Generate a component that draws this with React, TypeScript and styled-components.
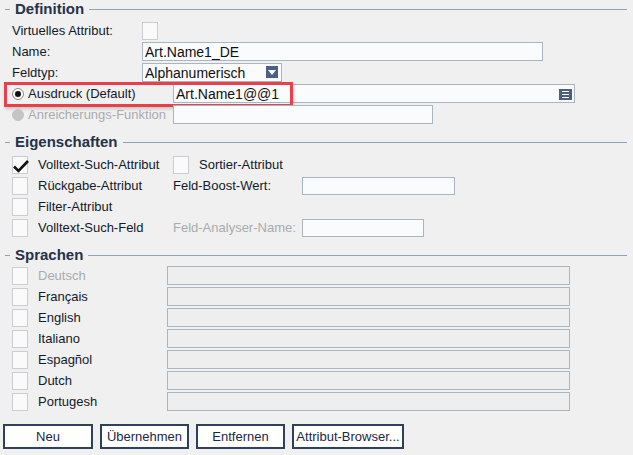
import React from "react"
import styled, { createGlobalStyle } from "styled-components"

const GlobalStyle = createGlobalStyle`
    html, body {
        margin: 0;
        padding: 0;
        background: #f0f0f0;
    }
    body {
        font-family: "Liberation Sans", Arial, sans-serif;
        font-size: 13px;
        color: #121a2b;
    }
`

const Page = styled.div`
    width: 633px;
    height: 455px;
    box-sizing: border-box;
    padding: 0 6px 0 5px;
    display: flex;
    flex-direction: column;
`

const Section = styled.section<{ $top: number }>`
    margin-top: ${(p) => p.$top}px;
`

const Header = styled.div`
    height: 18px;
    display: flex;
    align-items: center;
`

const Dash = styled.span`
    width: 5px;
    height: 1px;
    background: #8fa3bd;
`

const Title = styled.span`
    font-size: 15px;
    font-weight: bold;
    color: #25324a;
    padding: 0 5px 0 5px;
    line-height: 18px;
`

const Line = styled.span`
    flex: 1;
    height: 1px;
    background: #8fa3bd;
`

const Body = styled.div<{ $top: number }>`
    margin-top: ${(p) => p.$top}px;
    padding-left: 7px;
    display: flex;
    flex-direction: column;
    gap: 2px;
`

const Row = styled.div`
    position: relative;
    height: 19px;
    display: flex;
    align-items: center;
`

const Label = styled.span<{ $w?: number; $muted?: boolean }>`
    width: ${(p) => (p.$w ? `${p.$w}px` : "auto")};
    flex-shrink: 0;
    white-space: nowrap;
    color: ${(p) => (p.$muted ? "#a9abae" : "#121a2b")};
`

const Box = styled.span`
    width: 16px;
    height: 18px;
    box-sizing: border-box;
    flex-shrink: 0;
    border: 1px solid #cbcdd0;
    background: #fafafa;
    margin-right: 10px;
    position: relative;
    display: inline-flex;
    align-items: center;
    justify-content: center;
`

const Tick = styled.svg`
    position: absolute;
    left: -1px;
    top: 2px;
`

const Input = styled.div<{ $w: number; $disabled?: boolean }>`
    width: ${(p) => p.$w}px;
    height: 19px;
    box-sizing: border-box;
    border: 1px solid #a9b5c0;
    background: ${(p) => (p.$disabled ? "#eeeeee" : "#fafbfd")};
    position: relative;
    display: flex;
    align-items: center;
    padding-left: 2px;
    font-size: 14px;
    color: #101010;
`

const SmallInput = styled(Input)`
    height: 18px;
`

const DropBtn = styled.span`
    position: absolute;
    right: 3px;
    top: 2px;
    width: 12px;
    height: 12px;
    background: #4b6183;
    display: flex;
    align-items: center;
    justify-content: center;
`

const MenuBtn = styled.span`
    position: absolute;
    right: 2px;
    top: 4px;
    width: 13px;
    height: 11px;
    background: #4b6183;
    display: flex;
    align-items: center;
    justify-content: center;
`

const Radio = styled.span<{ $checked?: boolean; $disabled?: boolean }>`
    width: 12px;
    height: 12px;
    box-sizing: border-box;
    border-radius: 50%;
    flex-shrink: 0;
    margin-right: 4px;
    border: 1px solid ${(p) => (p.$disabled ? "#c4c4c4" : "#8c8c8c")};
    background: ${(p) => (p.$disabled ? "#c4c4c4" : "#ffffff")};
    display: flex;
    align-items: center;
    justify-content: center;
    &::after {
        content: "";
        display: ${(p) => (p.$checked ? "block" : "none")};
        width: 6px;
        height: 6px;
        border-radius: 50%;
        background: #111;
    }
`

const Highlight = styled.span`
    position: absolute;
    left: -8px;
    top: -2px;
    width: 289px;
    height: 25px;
    box-sizing: border-box;
    border: 3px solid #e8404a;
    box-shadow: 1px 2px 3px rgba(0, 0, 0, 0.18);
    pointer-events: none;
`

const Buttons = styled.div`
    margin-top: 13px;
    margin-left: -2px;
    display: flex;
    gap: 7px;
`

const Button = styled.button<{ $w: number }>`
    width: ${(p) => p.$w}px;
    height: 25px;
    box-sizing: border-box;
    border: 2px solid #2f3f5e;
    background: #ffffff;
    font-family: "Liberation Sans", Arial, sans-serif;
    font-size: 13px;
    color: #1b2746;
    padding: 0;
`

const languages = [
    { name: "Deutsch", muted: true },
    { name: "Français" },
    { name: "English" },
    { name: "Italiano" },
    { name: "Espagñol" },
    { name: "Dutch" },
    { name: "Portugesh" },
]

const SectionHead = ({ title }: { title: string }) => (
    <Header>
        <Dash />
        <Title>{title}</Title>
        <Line />
    </Header>
)

export default function App() {
    return (
        <>
            <GlobalStyle />
            <Page>
                <Section $top={0}>
                    <SectionHead title="Definition" />
                    <Body $top={3}>
                        <Row>
                            <Label $w={130}>Virtuelles Attribut:</Label>
                            <Box />
                        </Row>
                        <Row>
                            <Label $w={130}>Name:</Label>
                            <Input $w={401}>Art.Name1_DE</Input>
                        </Row>
                        <Row>
                            <Label $w={130}>Feldtyp:</Label>
                            <Input $w={140}>
                                Alphanumerisch
                                <DropBtn>
                                    <svg width="8" height="5" viewBox="0 0 8 5">
                                        <path d="M0 0h8L4 5z" fill="#fff" />
                                    </svg>
                                </DropBtn>
                            </Input>
                        </Row>
                        <Row>
                            <Radio $checked />
                            <Label $w={145}>Ausdruck (Default)</Label>
                            <Input $w={402}>
                                Art.Name1@@1
                                <MenuBtn>
                                    <svg width="7" height="7" viewBox="0 0 7 7">
                                        <path d="M0 0.5h7M0 3.5h7M0 6.5h7" stroke="#fff" strokeWidth="1.2" />
                                    </svg>
                                </MenuBtn>
                            </Input>
                            <Highlight />
                        </Row>
                        <Row>
                            <Radio $disabled />
                            <Label $w={145} $muted>Anreicherungs-Funktion</Label>
                            <Input $w={260} />
                        </Row>
                    </Body>
                </Section>

                <Section $top={9}>
                    <SectionHead title="Eigenschaften" />
                    <Body $top={4}>
                        <Row>
                            <Box>
                                <Tick width="18" height="14" viewBox="0 0 18 14">
                                    <path d="M2 7.5l4.5 4.5L16 2" fill="none" stroke="#111" strokeWidth="2.6" />
                                </Tick>
                            </Box>
                            <Label $w={135}>Volltext-Such-Attribut</Label>
                            <Box />
                            <Label>Sortier-Attribut</Label>
                        </Row>
                        <Row>
                            <Box />
                            <Label $w={135}>Rückgabe-Attribut</Label>
                            <Label $w={129}>Feld-Boost-Wert:</Label>
                            <SmallInput $w={153} />
                        </Row>
                        <Row>
                            <Box />
                            <Label $w={135}>Filter-Attribut</Label>
                        </Row>
                        <Row>
                            <Box />
                            <Label $w={135}>Volltext-Such-Feld</Label>
                            <Label $w={129} $muted>Feld-Analyser-Name:</Label>
                            <SmallInput $w={122} />
                        </Row>
                    </Body>
                </Section>

                <Section $top={9}>
                    <SectionHead title="Sprachen" />
                    <Body $top={2}>
                        {languages.map((l) => (
                            <Row key={l.name}>
                                <Box />
                                <Label $w={129} $muted={l.muted}>{l.name}</Label>
                                <Input $w={403} $disabled />
                            </Row>
                        ))}
                    </Body>
                </Section>

                <Buttons>
                    <Button $w={90}>Neu</Button>
                    <Button $w={89}>Übernehmen</Button>
                    <Button $w={89}>Entfernen</Button>
                    <Button $w={112}>Attribut-Browser...</Button>
                </Buttons>
            </Page>
        </>
    )
}
